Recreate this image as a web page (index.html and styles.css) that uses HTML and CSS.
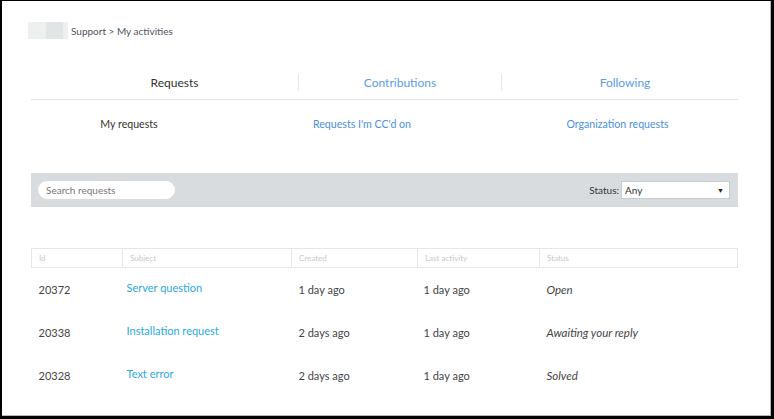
FILE: index.html
```html
<!DOCTYPE html>
<html lang="en">
<head>
  <meta charset="UTF-8">
  <title>My activities</title>
  <link rel="stylesheet" href="styles.css">
</head>
<body>
  <div class="frame">
    <div class="inner">
      <div class="breadcrumb">
        <span class="logo"><span class="logo-a"></span><span class="logo-b"></span><span class="logo-c"></span></span>
        <span class="crumbs">Support &gt; My activities</span>
      </div>

      <div class="tabs">
        <div class="tab tab-first active">Requests</div>
        <div class="tab tab-mid">Contributions</div>
        <div class="tab tab-last">Following</div>
      </div>

      <div class="subtabs">
        <div class="subtab sub-first active">My requests</div>
        <div class="subtab sub-mid">Requests I'm CC'd on</div>
        <div class="subtab sub-last">Organization requests</div>
      </div>

      <div class="filterbar">
        <div class="search">Search requests</div>
        <div class="status">
          <span class="status-label">Status:</span>
          <div class="select"><span>Any</span><span class="caret">&#9660;</span></div>
        </div>
      </div>

      <table class="requests">
        <colgroup>
          <col class="c-id">
          <col class="c-subject">
          <col class="c-created">
          <col class="c-activity">
          <col>
        </colgroup>
        <thead>
          <tr>
            <th>Id</th>
            <th>Subject</th>
            <th>Created</th>
            <th>Last activity</th>
            <th>Status</th>
          </tr>
        </thead>
        <tbody>
          <tr>
            <td>20372</td>
            <td><a class="subject" href="#">Server question</a></td>
            <td>1 day ago</td>
            <td>1 day ago</td>
            <td class="state">Open</td>
          </tr>
          <tr>
            <td>20338</td>
            <td><a class="subject" href="#">Installation request</a></td>
            <td>2 days ago</td>
            <td>1 day ago</td>
            <td class="state">Awaiting your reply</td>
          </tr>
          <tr>
            <td>20328</td>
            <td><a class="subject" href="#">Text error</a></td>
            <td>2 days ago</td>
            <td>1 day ago</td>
            <td class="state">Solved</td>
          </tr>
        </tbody>
      </table>
    </div>
  </div>
</body>
</html>
```

FILE: styles.css
```css
body {
  margin: 0;
  padding: 0;
  font-family: Lato, "Open Sans", Arial, sans-serif;
  background-color: #fff;
  color: #333;
}

.frame {
  width: 774px;
  height: 419px;
  box-sizing: border-box;
  border-style: solid;
  border-color: #000;
  border-width: 1px 3px 3px 2px;
}

.inner {
  height: 100%;
  box-sizing: border-box;
  border-right: 1px solid #b4b7bb;
  border-bottom: 1px solid #b4b7bb;
  padding: 21px 32px 0 29px;
}

.breadcrumb {
  display: flex;
  align-items: center;
  height: 17px;
  margin-left: -3px;
}

.logo {
  display: flex;
  height: 17px;
}

.logo-a { width: 18px; background-color: #eef0f0; }
.logo-b { width: 17px; background-color: #e2e5e6; }
.logo-c { width: 5px; background-color: #eef0f0; }

.crumbs {
  margin-left: 3px;
  font-size: 10px;
  color: #4f5560;
}

.tabs {
  display: flex;
  margin-top: 27px;
  padding: 8px 0;
  border-bottom: 1px solid #e2e2e2;
}

.tab {
  height: 17px;
  line-height: 17px;
  text-align: center;
  font-size: 12px;
  color: #5b9be4;
  box-sizing: border-box;
}

.tab.active { color: #333; }

.tab-first { width: 267px; padding-left: 20px; }
.tab-mid { width: 203px; border-left: 1px solid #e8e8e8; }
.tab-last { flex: 1; padding-left: 10px; border-left: 1px solid #e8e8e8; }

.subtabs {
  display: flex;
  margin-top: 16px;
  height: 16px;
  line-height: 16px;
  font-size: 10.6px;
}

.subtab {
  text-align: center;
  color: #4a8fe0;
}

.subtab.active { color: #333; }

.sub-first { width: 196px; }
.sub-mid { width: 270px; }
.sub-last { flex: 1; }

.filterbar {
  display: flex;
  align-items: center;
  justify-content: space-between;
  height: 34px;
  margin-top: 41px;
  padding: 0 8px 0 7px;
  background-color: #d8dcdf;
}

.search {
  width: 137px;
  height: 18px;
  line-height: 18px;
  box-sizing: border-box;
  padding-left: 8px;
  border-radius: 9px;
  background-color: #fff;
  font-size: 10px;
  color: #777;
}

.status {
  display: flex;
  align-items: center;
  font-size: 10px;
  color: #333;
}

.status-label { margin-right: 2px; }

.select {
  display: flex;
  justify-content: space-between;
  align-items: center;
  width: 109px;
  height: 18px;
  box-sizing: border-box;
  padding: 0 5px 0 3px;
  background-color: #fff;
  border: 1px solid #c8cbce;
}

.caret {
  font-size: 7px;
  color: #222;
}

.requests {
  width: 100%;
  margin-top: 41px;
  border-collapse: collapse;
  table-layout: fixed;
  font-size: 11px;
}

.c-id { width: 91px; }
.c-subject { width: 169px; }
.c-created { width: 126px; }
.c-activity { width: 122px; }

.requests th {
  height: 18px;
  padding: 0 0 0 7px;
  text-align: left;
  font-weight: normal;
  font-size: 8px;
  color: #c6c9cc;
  border: 1px solid #e4e6e8;
}

.requests td {
  height: 43px;
  padding: 0 0 0 7px;
  color: #444;
  vertical-align: middle;
  white-space: nowrap;
}

.requests td:nth-child(2) { padding-left: 4px; }
.requests td:nth-child(4) { padding-left: 6px; }

.subject {
  display: inline-block;
  padding-bottom: 4px;
  color: #29a8e4;
  text-decoration: none;
}

.state {
  font-style: italic;
  font-size: 11.5px;
}
```
